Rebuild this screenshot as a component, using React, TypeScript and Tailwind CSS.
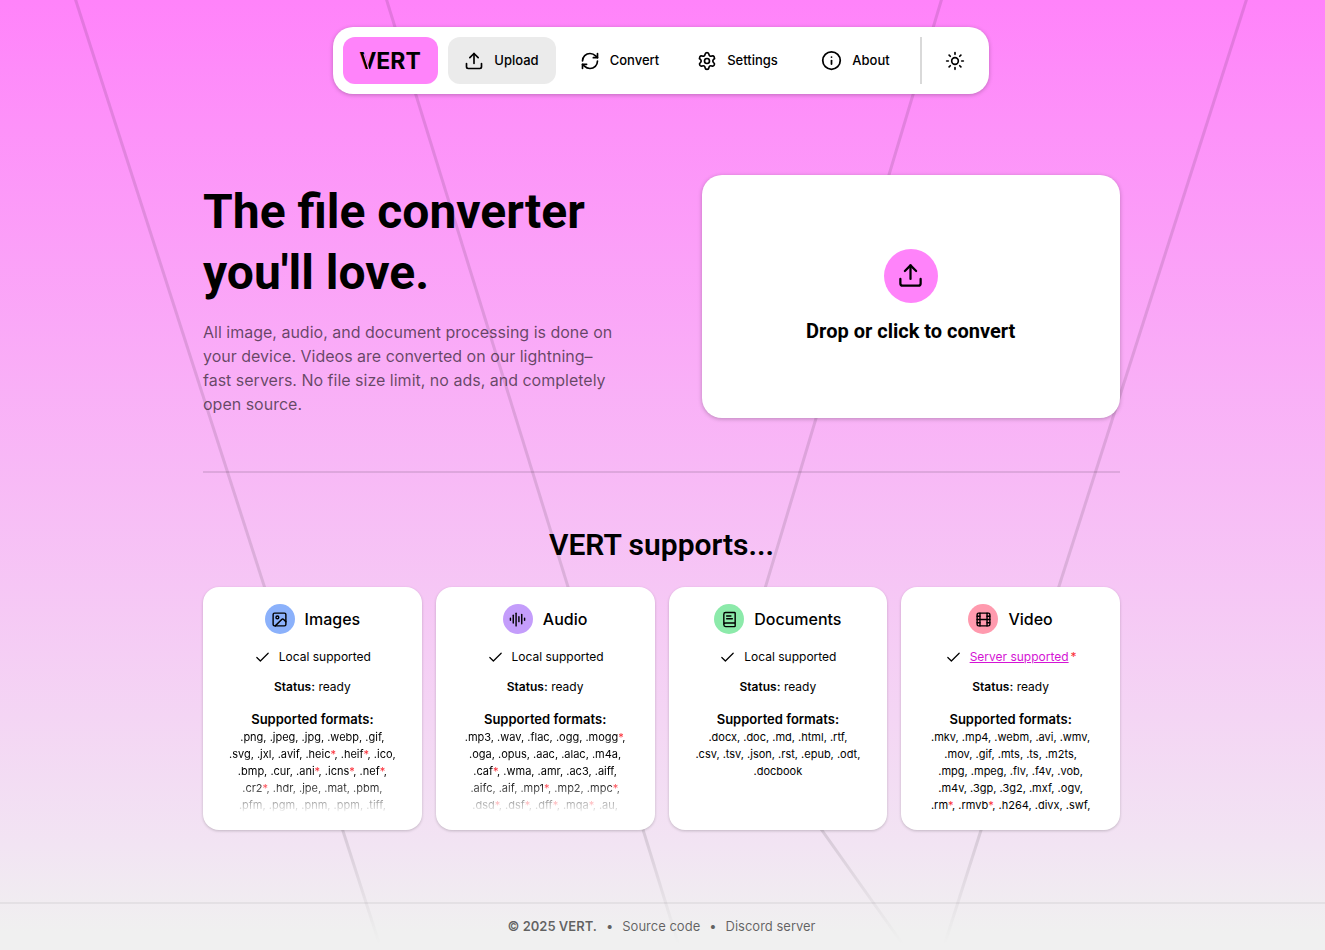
import React from "react";
import {
  AudioLines,
  BookText,
  Check,
  Film,
  Image as ImageIcon,
  Info,
  RefreshCw,
  Settings,
  Sun,
  Upload,
  type LucideIcon,
} from "lucide-react";

type Category = {
  title: string;
  icon: LucideIcon;
  tint: string;
  server?: boolean;
  fade?: boolean;
  lines: string[];
};

const categories: Category[] = [
  {
    title: "Images",
    icon: ImageIcon,
    tint: "bg-[#8bb1fb]",
    fade: true,
    lines: [
      ".png, .jpeg, .jpg, .webp, .gif,",
      ".svg, .jxl, .avif, .heic*, .heif*, .ico,",
      ".bmp, .cur, .ani*, .icns*, .nef*,",
      ".cr2*, .hdr, .jpe, .mat, .pbm,",
      ".pfm, .pgm, .pnm, .ppm, .tiff,",
    ],
  },
  {
    title: "Audio",
    icon: AudioLines,
    tint: "bg-[#c49dfb]",
    fade: true,
    lines: [
      ".mp3, .wav, .flac, .ogg, .mogg*,",
      ".oga, .opus, .aac, .alac, .m4a,",
      ".caf*, .wma, .amr, .ac3, .aiff,",
      ".aifc, .aif, .mp1*, .mp2, .mpc*,",
      ".dsd*, .dsf*, .dff*, .mqa*, .au,",
    ],
  },
  {
    title: "Documents",
    icon: BookText,
    tint: "bg-[#8ceaaa]",
    lines: [
      ".docx, .doc, .md, .html, .rtf,",
      ".csv, .tsv, .json, .rst, .epub, .odt,",
      ".docbook",
    ],
  },
  {
    title: "Video",
    icon: Film,
    tint: "bg-[#ff9aae]",
    server: true,
    lines: [
      ".mkv, .mp4, .webm, .avi, .wmv,",
      ".mov, .gif, .mts, .ts, .m2ts,",
      ".mpg, .mpeg, .flv, .f4v, .vob,",
      ".m4v, .3gp, .3g2, .mxf, .ogv,",
      ".rm*, .rmvb*, .h264, .divx, .swf,",
    ],
  },
];

const navItems: { label: string; icon: LucideIcon; active?: boolean }[] = [
  { label: "Upload", icon: Upload, active: true },
  { label: "Convert", icon: RefreshCw },
  { label: "Settings", icon: Settings },
  { label: "About", icon: Info },
];

function FormatLine({ text }: { text: string }) {
  return (
    <span className="block whitespace-nowrap">
      {text.split(/(\*)/).map((part, i) =>
        part === "*" ? (
          <span key={i} className="text-red-500">
            *
          </span>
        ) : (
          part
        ),
      )}
    </span>
  );
}

function Logo() {
  return (
    <svg width="70" height="36" viewBox="0 0 70 36" role="img" aria-label="VERT">
      <text
        x="35"
        y="26"
        textAnchor="middle"
        className="fill-black font-['Inter',sans-serif] text-[23px] font-bold"
      >
        VERT
      </text>
      <path d="M9 11 L14 27" className="stroke-[#ff83fa]" strokeWidth="1.3" />
    </svg>
  );
}

function Backdrop() {
  return (
    <svg
      className="absolute inset-0 h-full w-full"
      viewBox="0 0 1325 950"
      preserveAspectRatio="none"
      aria-hidden="true"
    >
      <defs>
        <linearGradient id="fade" x1="0" y1="0" x2="0" y2="950" gradientUnits="userSpaceOnUse">
          <stop offset="0.88" stopColor="#000" stopOpacity="0.11" />
          <stop offset="0.995" stopColor="#000" stopOpacity="0" />
        </linearGradient>
      </defs>
      <g fill="none" stroke="url(#fade)" strokeWidth="3">
        <path d="M75 -2 L380 946" />
        <path d="M386 -2 L679 946" />
        <path d="M942 -2 L731 702 L904 946" />
        <path d="M1247 -2 L944 946" />
      </g>
    </svg>
  );
}

function Card({ category }: { category: Category }) {
  const Icon = category.icon;
  return (
    <article className="flex h-[243px] flex-col items-center overflow-hidden rounded-2xl bg-white pt-[17px] text-center text-[12px] shadow-[0_1px_3px_rgba(0,0,0,0.2)]">
      <div className="flex items-center gap-[10px]">
        <span className={"flex size-[30px] items-center justify-center rounded-full " + category.tint}>
          <Icon size={17} strokeWidth={2} />
        </span>
        <h3 className="text-[16px] leading-6 font-medium">{category.title}</h3>
      </div>
      <p className="mt-[13px] flex items-center leading-5">
        <Check size={17} strokeWidth={1.75} className="mr-2" />
        {category.server ? (
          <>
            <a href="#server" className="text-[#d414d4] underline">
              Server supported
            </a>
            <span className="ml-[2px] text-red-500">*</span>
          </>
        ) : (
          "Local supported"
        )}
      </p>
      <p className="mt-[10px] leading-5">
        <b className="font-semibold">Status:</b> ready
      </p>
      <h4 className="mt-3 text-[13px] leading-5 font-semibold">Supported formats:</h4>
      <p
        className={
          category.fade
            ? "text-[11px] leading-[17px] [mask-image:linear-gradient(to_bottom,black_60%,transparent)]"
            : "text-[11px] leading-[17px]"
        }
      >
        {category.lines.map((line) => (
          <FormatLine key={line} text={line} />
        ))}
      </p>
    </article>
  );
}

export default function App() {
  return (
    <div className="relative flex min-h-screen flex-col bg-[linear-gradient(to_bottom,#ff83fa_0%,#f2e4f3_89%,#f0f0f0_98%)] font-['Inter',sans-serif] text-black">
      <Backdrop />

      <header className="relative flex justify-center pt-[27px] pr-5 pl-4">
        <nav className="flex h-[67px] items-center gap-[10px] rounded-[20px] bg-white p-[10px] shadow-[0_1px_4px_rgba(0,0,0,0.25)]">
          <a
            href="#home"
            className="flex h-full w-[95px] items-center justify-center rounded-xl bg-[#ff83fa]"
          >
            <Logo />
          </a>
          {navItems.map(({ label, icon: Icon, active }) => (
            <a
              key={label}
              href={"#" + label.toLowerCase()}
              className={
                active
                  ? "flex h-full w-[108px] items-center justify-center gap-[10px] rounded-xl bg-[#ebebeb] text-[13px] font-medium"
                  : "flex h-full w-[108px] items-center justify-center gap-[10px] rounded-xl text-[13px] font-medium"
              }
            >
              <Icon size={label === "About" ? 21 : 20} strokeWidth={2} />
              {label}
            </a>
          ))}
          <span className="h-full w-[2px] bg-[#d9d9d9]" />
          <button
            type="button"
            aria-label="Toggle theme"
            className="flex h-full w-[47px] items-center justify-center"
          >
            <Sun size={20} strokeWidth={2} />
          </button>
        </nav>
      </header>

      <main className="relative mx-auto w-full max-w-[919px] flex-1 pr-[2px]">
        <section className="mt-[81px] grid grid-cols-2 items-center gap-20">
          <div className="pt-[3px]">
            <h1 className="font-['Roboto',sans-serif] text-5xl leading-[61px] font-bold whitespace-nowrap">
              The file converter
              <br />
              you'll love.
            </h1>
            <p className="mt-[17px] text-[16px] leading-6 whitespace-nowrap text-black/60">
              All image, audio, and document processing is done on
              <br />
              your device. Videos are converted on our lightning–
              <br />
              fast servers. No file size limit, no ads, and completely
              <br />
              open source.
            </p>
          </div>
          <button
            type="button"
            className="flex h-[243px] flex-col items-center justify-center rounded-[20px] bg-white shadow-[0_1px_4px_rgba(0,0,0,0.25)]"
          >
            <span className="flex size-[54px] items-center justify-center rounded-full bg-[#ff83fa]">
              <Upload size={27} strokeWidth={2} />
            </span>
            <span className="mt-[14px] font-['Roboto',sans-serif] text-xl leading-7 font-bold">
              Drop or click to convert
            </span>
          </button>
        </section>

        <hr className="mt-[53px] border-t-2 border-black/10" />

        <section>
          <h2 className="mt-[52px] text-center font-['Roboto',sans-serif] text-3xl leading-10 font-semibold">
            VERT supports...
          </h2>
          <div className="mt-[22px] grid grid-cols-4 gap-[14px]">
            {categories.map((category) => (
              <Card key={category.title} category={category} />
            ))}
          </div>
        </section>
      </main>

      <footer className="relative flex h-12 items-center justify-center gap-[9px] border-t-2 border-black/5 pr-[2px] text-[13px] text-black/60">
        <span className="font-semibold">© 2025 VERT.</span>
        <span>•</span>
        <a href="#source">Source code</a>
        <span>•</span>
        <a href="#discord">Discord server</a>
      </footer>
    </div>
  );
}
